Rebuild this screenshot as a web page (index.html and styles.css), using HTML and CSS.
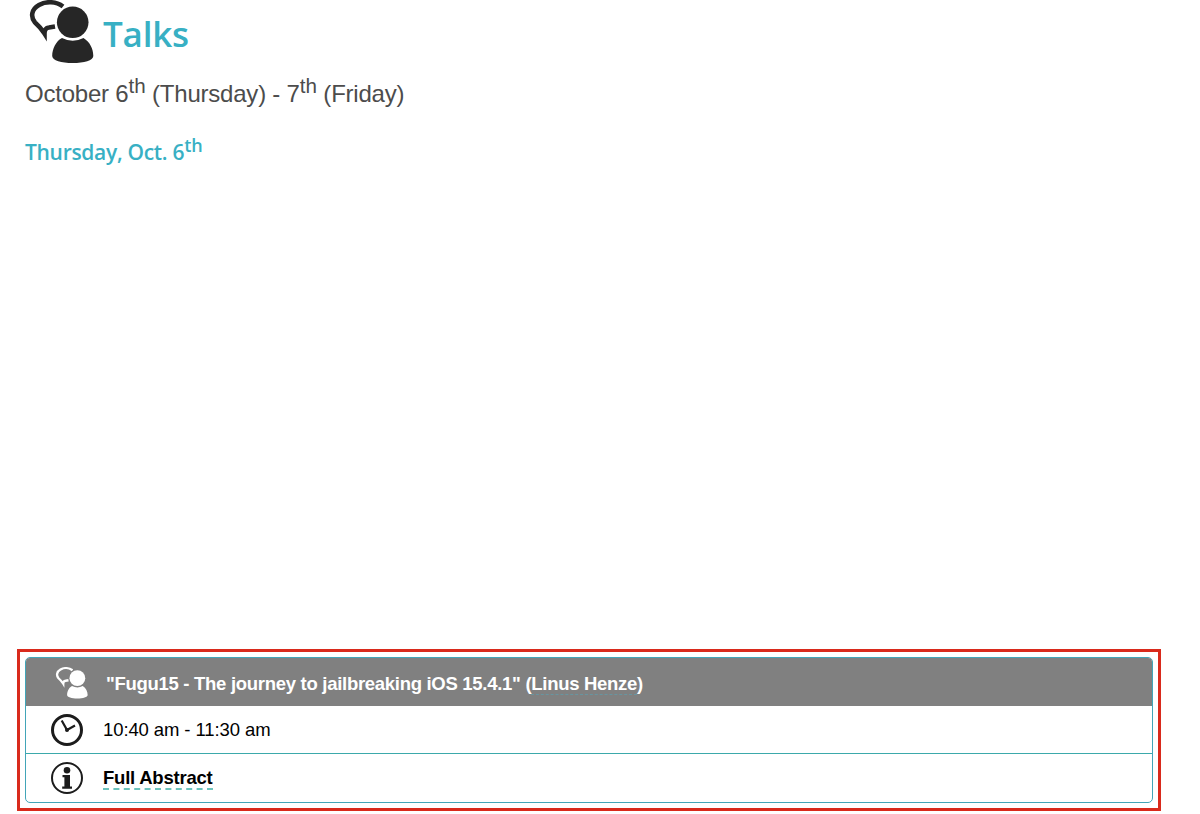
FILE: index.html
```html
<!DOCTYPE html>
<html lang="en">
<head>
<meta charset="utf-8">
<title>Talks</title>
<link rel="stylesheet" href="styles.css">
</head>
<body>
<svg class="defs" width="0" height="0">
  <symbol id="speaker" viewBox="0 0 66 64">
    <path d="M35 6.5 C28 1.2 18 1 11 5 C3 9.500 2.500 17 7 22.500 C11 26 13 28 16.500 33.500 C16.500 30 18 27.800 21 27.500 L27 26.500" fill="none" stroke="currentColor" stroke-width="4.6"/>
    <circle cx="44.7" cy="22.3" r="15.8"/>
    <path d="M34 38 Q44.7 43.5 55.500 38 C62 42 65.3 49 65.3 56 C65.3 60.5 56 63 44.7 63 C33.5 63 24.2 60.5 24.2 56 C24.2 49 28 41 34 38Z"/>
  </symbol>
</svg>
<main class="page">
  <header class="title">
    <svg class="title-icon"><use href="#speaker"/></svg>
    <h1>Talks</h1>
  </header>
  <p class="dates">October 6<sup>th</sup> (Thursday) - 7<sup>th</sup> (Friday)</p>
  <h2 class="day">Thursday, Oct. 6<sup>th</sup></h2>
  <section class="highlight">
    <article class="talk">
      <div class="row head">
        <svg class="icon speaker"><use href="#speaker"/></svg>
        <h3>"Fugu15 - The journey to jailbreaking iOS 15.4.1" (<a class="author">Linus Henze</a>)</h3>
      </div>
      <div class="row time">
        <svg class="icon" viewBox="0 0 32 32"><circle cx="16" cy="16" r="14.5" fill="none" stroke="#1c1c1c" stroke-width="3"/><path d="M10.7 6.5 L16 16 L24 11.5" fill="none" stroke="#1c1c1c" stroke-width="2.2"/><circle cx="16" cy="16" r="2" fill="#1c1c1c"/></svg>
        <span>10:40 am - 11:30 am</span>
      </div>
      <div class="row info">
        <svg class="icon" viewBox="0 0 32 32"><circle cx="16" cy="16" r="15" fill="none" stroke="#1c1c1c" stroke-width="2"/><circle cx="16" cy="8.2" r="3.3" fill="#1c1c1c"/><path d="M11.500 13h7.500v11.400h2v2.400h-9.800v-2.400h2.200v-9.100h-1.900z" fill="#1c1c1c"/></svg>
        <a class="abstract">Full Abstract</a>
      </div>
    </article>
  </section>
</main>
</body>
</html>
```
FILE: styles.css
```css
* { box-sizing: border-box; }
body { margin: 0; background: #fff; font-family: "Liberation Sans", Arial, sans-serif; }
h1, h2, h3, p { margin: 0; }
sup { font-size: 0.86em; line-height: 0; vertical-align: baseline; position: relative; top: -0.42em; letter-spacing: 0; }
.defs { display: block; height: 0; }
.page { height: 814px; overflow: hidden; display: flex; flex-direction: column; }
.title { display: flex; height: 64px; padding-left: 28px; flex: none; }
.title-icon { width: 66px; height: 64px; fill: #262626; color: #262626; flex: none; }
h1 { margin-left: 9px; padding-top: 4px; font: 600 35px/60px "Open Sans", sans-serif; color: #38b0c4; white-space: nowrap; letter-spacing: -0.2px; }
.dates { padding: 15px 0 0 25px; height: 66px; font-size: 24px; line-height: 30px; color: #4c4c4c; letter-spacing: -0.22px; white-space: nowrap; }
.day { padding: 7px 0 0 25px; font: 600 21px/30px "Open Sans", sans-serif; color: #38b0c4; white-space: nowrap; letter-spacing: -0.3px; }
.highlight { margin: auto 39px 3px 17px; height: 162px; border: 3px solid #d92a1c; padding: 5px; }
.talk { height: 146px; border: 1px solid #42a5b8; border-radius: 5px; overflow: hidden; }
.row { display: flex; align-items: center; height: 48px; padding-left: 25px; font-size: 18.5px; letter-spacing: -0.1px; color: #000; white-space: nowrap; }
.icon { width: 32px; height: 32px; margin-right: 20px; flex: none; }
.head { background: #808080; color: #fff; padding-top: 3px; }
.speaker { width: 33px; height: 32px; margin: -2px 18px 0 4px; fill: #fff; color: #fff; }
h3 { font-size: 18.5px; font-weight: 700; letter-spacing: -0.29px; }
.author { border-bottom: 1px dashed #6795a0; }
.time { border-bottom: 1px solid #3ba9ab; }
.abstract { font-weight: 700; border-bottom: 2px dashed #6cc3bd; line-height: 20px; letter-spacing: -0.22px; padding-top: 2px; }
```
